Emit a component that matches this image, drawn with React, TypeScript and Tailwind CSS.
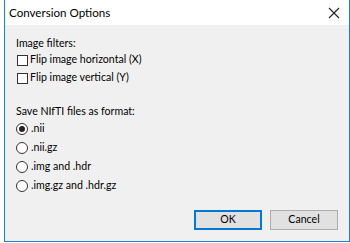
import { useState } from 'react'

const FONT = { fontFamily: 'Lato, "Noto Sans", sans-serif' }

function Checkbox({ label }: { label: string }) {
  return (
    <label className="flex h-[18px] items-center">
      <span className="ml-[1px] h-[11px] w-[11px] border border-[#333] bg-white" />
      <span className="ml-[2px] text-[10.6px] text-black">{label}</span>
    </label>
  )
}

function Radio({ label, checked, onClick }: { label: string; checked: boolean; onClick: () => void }) {
  return (
    <div className="flex h-[19px] items-center" onClick={onClick}>
      <span className="flex h-[12px] w-[12px] items-center justify-center rounded-full border border-[#333] bg-white">
        {checked && <span className="h-[6px] w-[6px] rounded-full bg-[#222]" />}
      </span>
      <span className="ml-[3px] text-[10.6px] text-black">{label}</span>
    </div>
  )
}

const FORMATS = ['.nii', '.nii.gz', '.img and .hdr', '.img.gz and .hdr.gz']

export default function App() {
  const [fmt, setFmt] = useState(0)

  return (
    <div className="h-[243px] w-[350px] bg-white" style={FONT}>
      <div className="ml-[4px] flex h-[242px] w-[346px] flex-col border-x border-b border-[#1883d7]">
        {/* Title bar */}
        <div className="flex h-[25px] items-center justify-between bg-white pl-[4px] pr-[8px]">
          <span className="text-[11.6px] text-black">Conversion Options</span>
          <svg width="12" height="12" viewBox="0 0 12 12" className="mr-[1px]">
            <path d="M1 1L11 11M11 1L1 11" stroke="#222" strokeWidth="1.1" />
          </svg>
        </div>

        {/* Body */}
        <div className="flex flex-1 flex-col bg-[#f0f0f0] pl-[11px] pr-[11px] pt-[12px]">
          <div className="flex h-[14px] items-center text-[10.6px] text-black">Image filters:</div>
          <Checkbox label="Flip image horizontal (X)" />
          <Checkbox label="Flip image vertical (Y)" />

          <div className="mt-[18px] flex h-[14px] items-center text-[10.6px] text-black">Save NIfTI files as format:</div>
          {FORMATS.map((f, i) => (
            <Radio key={f} label={f} checked={fmt === i} onClick={() => setFmt(i)} />
          ))}

          <div className="mt-[15px] flex justify-end gap-[8px]">
            <button className="h-[20px] w-[68px] border-2 border-[#0078d7] bg-[#e1e1e1] text-[10.6px] text-black">OK</button>
            <button className="h-[20px] w-[68px] border border-[#adadad] bg-[#e1e1e1] text-[10.6px] text-black">Cancel</button>
          </div>
        </div>
      </div>
    </div>
  )
}
